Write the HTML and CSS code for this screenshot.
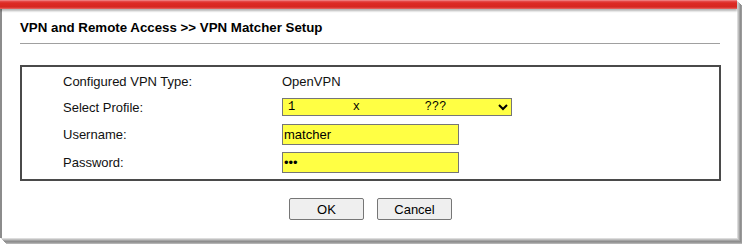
FILE: index.html
```html
<!DOCTYPE html>
<html>
<head>
<meta charset='utf-8'>
<title>VPN Matcher Setup</title>
<link rel="stylesheet" href="styles.css">
</head>
<body>

<div class=window>
	<div class=topbar></div>

	<div class=head>VPN and Remote Access &gt;&gt; VPN Matcher Setup</div>

	<div class=box>
		<div class=label>Configured VPN Type:</div>
		<div class=value>OpenVPN</div>

		<div class=label>Select Profile:</div>
		<div class=value>
			<select class=profile>
				<option>1&nbsp;&nbsp;&nbsp;&nbsp;&nbsp;&nbsp;&nbsp;&nbsp;x&nbsp;&nbsp;&nbsp;&nbsp;&nbsp;&nbsp;&nbsp;&nbsp;&nbsp;???</option>
			</select>
		</div>

		<div class=label>Username:</div>
		<div class=value><input class=field type=text value='matcher'></div>

		<div class=label>Password:</div>
		<div class=value><input class=field type=password value='abc'></div>
	</div>

	<div class=buttons>
		<button class=btn>OK</button>
		<button class=btn>Cancel</button>
	</div>
</div>

</body>
</html>
```

FILE: styles.css
```css
body, html {
	margin: 0;
	height: 244px;
	overflow: hidden;
	background: white;
	font-family: "Liberation Sans", Arial, sans-serif;
	font-size: 13px;
	color: #111;
}

.window {
	width: 735px;
	height: 238px;
	border-left: 2px solid #8c8c8c;
	background: white;
	/* stepped grey shadow on the right and bottom */
	box-shadow:
		1px 1px 0 #dcdcdc,
		2px 2px 0 #c0c0c0,
		3px 3px 0 #a4a4a4,
		4px 4px 0 #8e8e8e,
		5px 5px 0 #9a9a9a,
		6px 6px 0 #b4b4b4;
}

.topbar {
	height: 9px;
	margin-left: -2px;
	background: linear-gradient(#f4a0a0 0, #e85050 1px, #dd2a24 3px, #d62620 7px, #e86a66 9px);
	box-shadow: 0 2px 2px rgba(0, 0, 0, .3);
}

.head {
	margin: 0 17px 0 18px;
	padding: 11px 0 7px;
	line-height: 16px;
	font-size: 13.3px;
	font-weight: bold;
	color: #000;
	border-bottom: 1px solid #a0a0a0;
}

.box {
	margin: 21px 16px 0 18px;
	border: 2px solid #4a4a4a;
	display: grid;
	grid-template-columns: 219px auto;
	grid-template-rows: 18px 18px 20px 20px;
	row-gap: 8px;
	padding: 5px 0 7px 41px;
}

.label, .value {
	display: flex;
	align-items: center;
}

.profile {
	width: 230px;
	height: 18px;
	padding: 0 1px;
	background: #ffff44;
	border: 1px solid #767676;
	border-radius: 0;
	font-family: "Liberation Mono", "Courier New", monospace;
	font-size: 12px;
	color: #000;
}

.field {
	width: 177px;
	height: 21px;
	box-sizing: border-box;
	padding: 0 1px;
	margin: 0;
	background: #ffff44;
	border: 1px solid #767676;
	font-family: "Liberation Sans", Arial, sans-serif;
	font-size: 13px;
	color: #000;
}

.buttons {
	display: flex;
	justify-content: center;
	gap: 13px;
	margin: 17px 16px 0 18px;
}

.btn {
	width: 75px;
	height: 22px;
	background: #efefef;
	border: 1px solid #767676;
	border-radius: 2px;
	font-family: "Liberation Sans", Arial, sans-serif;
	font-size: 13px;
	color: #000;
}
```
